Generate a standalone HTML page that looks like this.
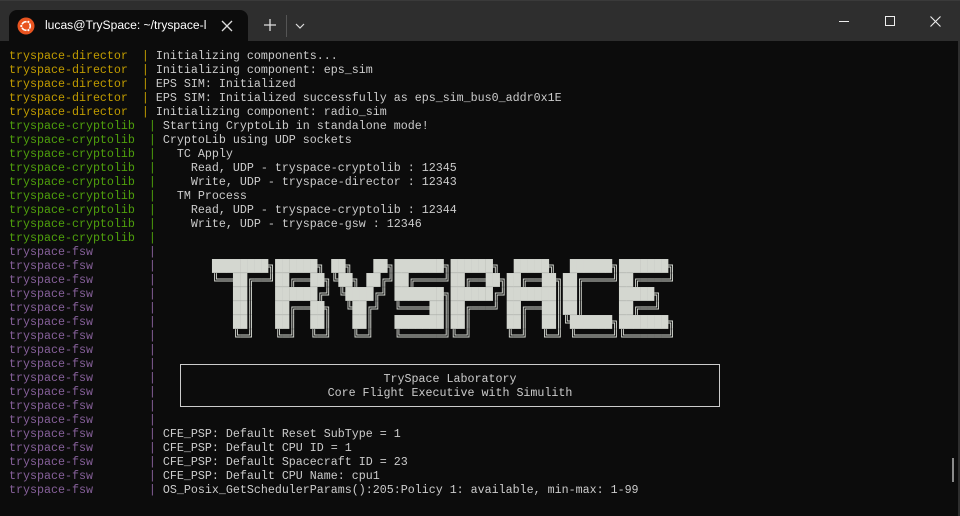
<!DOCTYPE html>
<html><head><meta charset="utf-8"><style>
*{margin:0;padding:0;box-sizing:border-box}
body{width:960px;height:516px;background:#0c0c0c;overflow:hidden;position:relative;font-family:"Liberation Mono","DejaVu Sans Mono",monospace}
.bar{position:absolute;left:0;top:0;width:960px;height:41px;background:#2e2e2e;border-top:1px solid #3a3a3a}
.tab{position:absolute;left:9px;top:9px;width:239px;height:32px;background:#0c0c0c;border-radius:8px 8px 0 0}
.ttl{position:absolute;left:45px;top:17px;color:#fff;font:12.1px "Liberation Sans",sans-serif;white-space:nowrap}
.term{position:absolute;left:9px;top:49px;font-size:11.67px;line-height:14px;color:#cccccc;white-space:pre}
.y{color:#c19c00}.g{color:#4fa00c}.p{color:#86609a}
.logo{position:absolute;left:212px;top:259px;font-family:"DejaVu Sans Mono",monospace;font-size:11.67px;line-height:14px;color:#d4d7d0;white-space:pre;letter-spacing:0}
.box{position:absolute;left:180px;top:364px;width:540px;height:43px;border:1px solid #cccccc;font-size:11.67px;line-height:14px;color:#ccc;text-align:center;padding-top:7px;white-space:pre}
</style></head><body>
<div class="bar">
<div class="tab"></div>
<svg style="position:absolute;left:17px;top:16px" width="18" height="18" viewBox="0 0 18 18"><circle cx="9" cy="9" r="8.5" fill="#e95420"/><circle cx="9" cy="9" r="4.3" fill="none" stroke="#fff" stroke-width="1.6"/><circle cx="4.3" cy="9" r="1.5" fill="#fff" stroke="#e95420" stroke-width=".8"/><circle cx="11.4" cy="4.9" r="1.5" fill="#fff" stroke="#e95420" stroke-width=".8"/><circle cx="11.4" cy="13.1" r="1.5" fill="#fff" stroke="#e95420" stroke-width=".8"/></svg>
<div class="ttl">lucas@TrySpace: ~/tryspace-l</div>
<svg style="position:absolute;left:221px;top:19px" width="12" height="12"><path d="M1 1L11 11M11 1L1 11" stroke="#ddd" stroke-width="1.3"/></svg>
<svg style="position:absolute;left:264px;top:18px" width="12" height="12"><path d="M6 0V12M0 6H12" stroke="#ddd" stroke-width="1.3"/></svg>
<div style="position:absolute;left:286px;top:14px;width:1px;height:22px;background:#555"></div>
<svg style="position:absolute;left:295px;top:22px" width="10" height="6"><path d="M1 1L5 5L9 1" stroke="#ddd" stroke-width="1.2" fill="none"/></svg>
<div style="position:absolute;left:839px;top:20px;width:10px;height:1px;background:#eee"></div>
<div style="position:absolute;left:885px;top:15px;width:10px;height:10px;border:1px solid #eee"></div>
<svg style="position:absolute;left:930px;top:15px" width="11" height="11"><path d="M0.5 0.5L10.5 10.5M10.5 0.5L0.5 10.5" stroke="#eee" stroke-width="1.1"/></svg>
</div>
<div class="term"><span class="y">tryspace-director  |</span> Initializing components...
<span class="y">tryspace-director  |</span> Initializing component: eps_sim
<span class="y">tryspace-director  |</span> EPS SIM: Initialized
<span class="y">tryspace-director  |</span> EPS SIM: Initialized successfully as eps_sim_bus0_addr0x1E
<span class="y">tryspace-director  |</span> Initializing component: radio_sim
<span class="g">tryspace-cryptolib  |</span> Starting CryptoLib in standalone mode!
<span class="g">tryspace-cryptolib  |</span> CryptoLib using UDP sockets
<span class="g">tryspace-cryptolib  |</span>   TC Apply
<span class="g">tryspace-cryptolib  |</span>     Read, UDP - tryspace-cryptolib : 12345
<span class="g">tryspace-cryptolib  |</span>     Write, UDP - tryspace-director : 12343
<span class="g">tryspace-cryptolib  |</span>   TM Process
<span class="g">tryspace-cryptolib  |</span>     Read, UDP - tryspace-cryptolib : 12344
<span class="g">tryspace-cryptolib  |</span>     Write, UDP - tryspace-gsw : 12346
<span class="g">tryspace-cryptolib  |</span>
<span class="p">tryspace-fsw        |</span>
<span class="p">tryspace-fsw        |</span>
<span class="p">tryspace-fsw        |</span>
<span class="p">tryspace-fsw        |</span>
<span class="p">tryspace-fsw        |</span>
<span class="p">tryspace-fsw        |</span>
<span class="p">tryspace-fsw        |</span>
<span class="p">tryspace-fsw        |</span>
<span class="p">tryspace-fsw        |</span>
<span class="p">tryspace-fsw        |</span>
<span class="p">tryspace-fsw        |</span>
<span class="p">tryspace-fsw        |</span>
<span class="p">tryspace-fsw        |</span>
<span class="p">tryspace-fsw        |</span> CFE_PSP: Default Reset SubType = 1
<span class="p">tryspace-fsw        |</span> CFE_PSP: Default CPU ID = 1
<span class="p">tryspace-fsw        |</span> CFE_PSP: Default Spacecraft ID = 23
<span class="p">tryspace-fsw        |</span> CFE_PSP: Default CPU Name: cpu1
<span class="p">tryspace-fsw        |</span> OS_Posix_GetSchedulerParams():205:Policy 1: available, min-max: 1-99</div>
<div class="logo">████████╗██████╗ ██╗   ██╗███████╗██████╗  █████╗  ██████╗███████╗
╚══██╔══╝██╔══██╗╚██╗ ██╔╝██╔════╝██╔══██╗██╔══██╗██╔════╝██╔════╝
   ██║   ██████╔╝ ╚████╔╝ ███████╗██████╔╝███████║██║     █████╗
   ██║   ██╔══██╗  ╚██╔╝  ╚════██║██╔═══╝ ██╔══██║██║     ██╔══╝
   ██║   ██║  ██║   ██║   ███████║██║     ██║  ██║╚██████╗███████╗
   ╚═╝   ╚═╝  ╚═╝   ╚═╝   ╚══════╝╚═╝     ╚═╝  ╚═╝ ╚═════╝╚══════╝</div>
<div class="box">TrySpace Laboratory
Core Flight Executive with Simulith</div>
<div style="position:absolute;left:952px;top:458px;width:2px;height:24px;background:#8a8a8a"></div>
<div style="position:absolute;left:958px;top:41px;width:2px;height:475px;background:#2e2e2e"></div>
</body></html>
